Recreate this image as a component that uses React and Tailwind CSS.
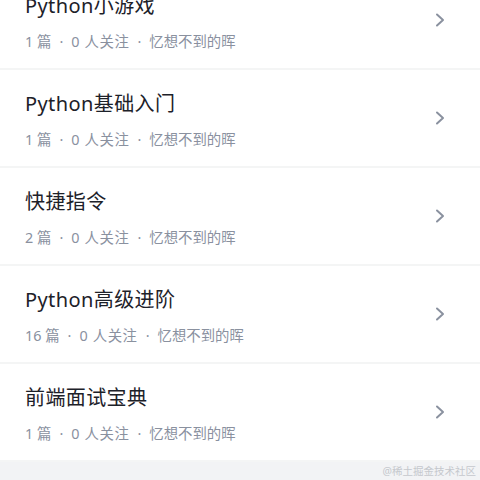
const columns = [
  { title: "Python小游戏", count: "1" },
  { title: "Python基础入门", count: "1" },
  { title: "快捷指令", count: "2" },
  { title: "Python高级进阶", count: "16" },
  { title: "前端面试宝典", count: "1" },
];

const font = {
  fontFamily: '"Noto Sans", "Noto Sans CJK SC", sans-serif',
};

function Chevron() {
  return (
    <svg width="11" height="14" viewBox="0 0 11 14" fill="none">
      <polyline
        points="2,1.5 8,7 2,12.5"
        stroke="#8a919f"
        strokeWidth="2"
        strokeLinecap="round"
        strokeLinejoin="round"
      />
    </svg>
  );
}

export default function App() {
  return (
    <div
      className="h-[480px] w-[480px] overflow-hidden bg-white"
      style={font}
    >
      <div className="mt-[-28px]">
        {columns.map((item) => (
          <div
            key={item.title}
            className="flex h-[98px] items-center border-b-2 border-[#f4f5f5] pl-[25px] pr-[34px]"
          >
            <div className="flex-1 pt-[20px] pb-[16px] self-start">
              <h3 className="text-[20px] leading-[28px] tracking-[0.4px] text-[#1d2129]">
                {item.title}
              </h3>
              <p className="mt-[12px] flex items-center text-[14.4px] leading-[20px] text-[#8a919f]">
                <span>{item.count} 篇</span>
                <span className="px-[8px]">·</span>
                <span className="tracking-[0.6px]">0 人关注</span>
                <span className="px-[8px]">·</span>
                <span>忆想不到的晖</span>
              </p>
            </div>
            <Chevron />
          </div>
        ))}
      </div>
      <div className="flex h-[19px] items-center justify-end bg-[#f2f3f5] pr-[4px] text-[10.5px] text-[#c5c8cd]">
        @稀土掘金技术社区
      </div>
    </div>
  );
}
